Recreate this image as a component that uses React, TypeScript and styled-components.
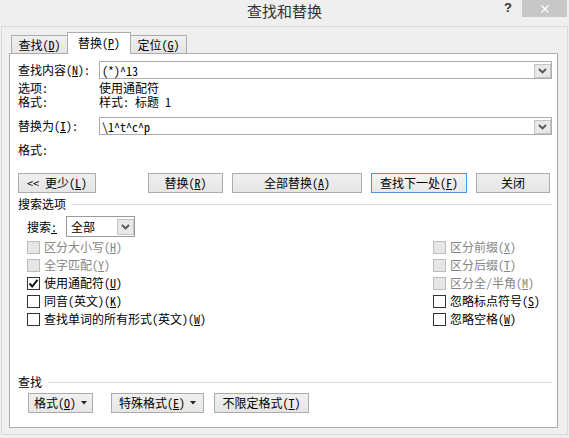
import React from "react";
import styled, { createGlobalStyle } from "styled-components";

const Global = createGlobalStyle`
  html, body { margin: 0; padding: 0; background: #efefef; }
  body {
    font-family: "Noto Sans Mono CJK SC", "Noto Sans CJK SC", sans-serif;
    font-size: 12px;
    color: #000;
  }
  #root { width: 569px; height: 438px; }
`;

const Window = styled.div`
  width: 569px;
  height: 438px;
  box-sizing: border-box;
  background: #efefef;
  display: flex;
  flex-direction: column;
  overflow: hidden;
`;

const TitleBar = styled.div`
  flex: none;
  height: 26px;
  display: grid;
  grid-template-columns: 1fr auto 1fr;
  align-items: start;
`;

const Title = styled.div`
  grid-column: 2;
  font-family: "Noto Sans CJK SC", sans-serif;
  font-size: 15px;
  line-height: 22px;
  color: #333;
`;

const TitleTools = styled.div`
  grid-column: 3;
  justify-self: end;
  display: flex;
  align-items: flex-start;
  margin-right: 2px;
`;

const HelpMark = styled.span`
  font: bold 13px "Liberation Sans", sans-serif;
  line-height: 15px;
  color: #333;
  margin-right: 10px;
`;

const CloseBtn = styled.div`
  width: 45px;
  height: 17px;
  background: #c7c7c7;
  display: flex;
  align-items: center;
  justify-content: center;
`;

const Frame = styled.div`
  flex: 1;
  display: flex;
  flex-direction: column;
  margin: 0 1px 3px 1px;
  border: 1px solid #d9d9d9;
  padding: 5px 9px 6px 7px;
  min-height: 0;
`;

const TabRow = styled.div`
  flex: none;
  height: 21px;
  display: flex;
  align-items: flex-end;
  padding-left: 2px;
`;

const Tab = styled.div<{ $w: number; $active?: boolean; $overlap?: boolean }>`
  box-sizing: border-box;
  width: ${(p) => p.$w}px;
  height: ${(p) => (p.$active ? 22 : 18)}px;
  margin-bottom: ${(p) => (p.$active ? -1 : 0)}px;
  margin-left: ${(p) => (p.$active || p.$overlap ? -1 : 0)}px;
  position: relative;
  z-index: ${(p) => (p.$active ? 1 : 0)};
  border: 1px solid #acacac;
  border-bottom: none;
  background: ${(p) => (p.$active ? "#fff" : "linear-gradient(#f0f0f0, #e5e5e5)")};
  display: flex;
  align-items: center;
  justify-content: center;
  line-height: 16px;
  padding-bottom: ${(p) => (p.$active ? 2 : 0)}px;
`;

const Panel = styled.div`
  flex: 1;
  display: flex;
  flex-direction: column;
  background: #fff;
  border: 1px solid #acacac;
  padding: 7px 5px 14px 8px;
  min-height: 0;
`;

const FieldRow = styled.div<{ $mt?: number }>`
  display: flex;
  align-items: center;
  margin-top: ${(p) => p.$mt ?? 0}px;
`;

const Label = styled.div`
  width: 81px;
  flex: none;
  line-height: 14px;
  white-space: nowrap;
`;

const InfoRow = styled.div<{ $mt?: number }>`
  display: flex;
  line-height: 14px;
  height: 14px;
  margin-top: ${(p) => p.$mt ?? 0}px;
`;

const Value = styled.div`
  white-space: nowrap;
`;

const Combo = styled.div<{ $w?: number; $h: number; $border?: string }>`
  box-sizing: border-box;
  ${(p) => (p.$w ? `width: ${p.$w}px; flex: none;` : "flex: 1;")}
  height: ${(p) => p.$h}px;
  border: 1px solid ${(p) => p.$border ?? "#acacac"};
  background: #fff;
  display: flex;
  padding: 1px 0 0 0;
`;

const ComboText = styled.div<{ $pl?: number }>`
  flex: 1;
  padding-left: ${(p) => p.$pl ?? 2}px;
  line-height: 14px;
  white-space: nowrap;
  align-self: center;
`;

const DropBtn = styled.div<{ $mb?: number }>`
  box-sizing: border-box;
  width: 17px;
  flex: none;
  margin: 1px 0 ${(p) => p.$mb ?? 0}px 0;
  border: 1px solid #c4c4c4;
  background: #e8e8e8;
  display: flex;
  align-items: center;
  justify-content: center;
`;

const ButtonRow = styled.div<{ $mt?: number; $pl?: number }>`
  display: flex;
  margin-top: ${(p) => p.$mt ?? 0}px;
  padding-left: ${(p) => p.$pl ?? 0}px;
`;

const Button = styled.div<{ $w: number; $ml?: number; $default?: boolean }>`
  box-sizing: border-box;
  width: ${(p) => p.$w}px;
  height: 20px;
  margin-left: ${(p) => p.$ml ?? 0}px;
  border: 1px solid ${(p) => (p.$default ? "#4c94dd" : "#acacac")};
  background: ${(p) =>
    p.$default ? "linear-gradient(#f4f4f4, #e8e8e8)" : "linear-gradient(#f0f0f0, #e5e5e5)"};
  display: flex;
  align-items: center;
  justify-content: center;
  gap: 5px;
  line-height: 16px;
  white-space: nowrap;
`;

const SectionHeading = styled.div<{ $mt?: number }>`
  display: flex;
  align-items: center;
  gap: 6px;
  line-height: 14px;
  height: 14px;
  margin-top: ${(p) => p.$mt ?? 0}px;
  &::after {
    content: "";
    flex: 1;
    height: 1px;
    background: #dcdcdc;
  }
`;

const SearchRow = styled.div`
  display: flex;
  align-items: center;
  margin-top: 5px;
  padding-left: 9px;
  gap: 4px;
`;

const SearchLabel = styled.div`
  width: 35px;
  line-height: 14px;
  white-space: nowrap;
`;

const CheckGrid = styled.div`
  display: grid;
  grid-template-columns: 406px 1fr;
  grid-template-rows: repeat(5, 18px);
  grid-auto-flow: column;
  margin-top: 1px;
  padding-left: 9px;
`;

const CheckItem = styled.div<{ $disabled?: boolean }>`
  display: flex;
  align-items: center;
  gap: 4px;
  color: ${(p) => (p.$disabled ? "#858585" : "#000")};
  line-height: 14px;
  white-space: nowrap;
`;

const Box = styled.div<{ $disabled?: boolean }>`
  box-sizing: border-box;
  width: 13px;
  height: 13px;
  flex: none;
  border: 1px solid ${(p) => (p.$disabled ? "#bcbcbc" : "#333")};
  background: ${(p) => (p.$disabled ? "#e6e6e6" : "#fff")};
  display: flex;
  align-items: center;
  justify-content: center;
`;

const Spacer = styled.div`
  flex: 1;
`;

const Acc = styled.u`
  text-decoration: underline;
  text-underline-offset: 1px;
`;

const Chevron = () => (
  <svg width="9" height="6" viewBox="0 0 9 6">
    <path d="M1 1 L4.5 4.5 L8 1" fill="none" stroke="#555" strokeWidth="1.8" />
  </svg>
);

const Caret = () => (
  <svg width="6" height="4" viewBox="0 0 6 4">
    <path d="M0 0 H6 L3 3.5 Z" fill="#222" />
  </svg>
);

const Tick = () => (
  <svg width="11" height="11" viewBox="0 0 11 11">
    <path d="M1.5 5.5 L4.2 8.5 L9.5 1.8" fill="none" stroke="#111" strokeWidth="1.9" />
  </svg>
);

const CloseIcon = () => (
  <svg width="10" height="10" viewBox="0 0 10 10">
    <path d="M1.5 1.5 L8.5 8.5 M8.5 1.5 L1.5 8.5" stroke="#fff" strokeWidth="1.4" />
  </svg>
);

type Opt = { text: string; key: string; disabled?: boolean; checked?: boolean };

const options: Opt[] = [
  { text: "区分大小写", key: "H", disabled: true },
  { text: "全字匹配", key: "Y", disabled: true },
  { text: "使用通配符", key: "U", checked: true },
  { text: "同音(英文)", key: "K" },
  { text: "查找单词的所有形式(英文)", key: "W" },
  { text: "区分前缀", key: "X", disabled: true },
  { text: "区分后缀", key: "T", disabled: true },
  { text: "区分全/半角", key: "M", disabled: true },
  { text: "忽略标点符号", key: "S" },
  { text: "忽略空格", key: "W" },
];

const A = ({ t, k }: { t: string; k: string }) => (
  <span>
    {t}(<Acc>{k}</Acc>)
  </span>
);

export default function App() {
  return (
    <>
      <Global />
      <Window>
        <TitleBar>
          <Title>查找和替换</Title>
          <TitleTools>
            <HelpMark>?</HelpMark>
            <CloseBtn>
              <CloseIcon />
            </CloseBtn>
          </TitleTools>
        </TitleBar>
        <Frame>
          <TabRow>
            <Tab $w={57}>
              <A t="查找" k="D" />
            </Tab>
            <Tab $w={64} $active>
              <A t="替换" k="P" />
            </Tab>
            <Tab $w={57} $overlap>
              <A t="定位" k="G" />
            </Tab>
          </TabRow>
          <Panel>
            <FieldRow>
              <Label>
                查找内容(<Acc>N</Acc>):
              </Label>
              <Combo $h={18}>
                <ComboText>(*)^13</ComboText>
                <DropBtn>
                  <Chevron />
                </DropBtn>
              </Combo>
            </FieldRow>
            <InfoRow $mt={2}>
              <Label>选项:</Label>
              <Value>使用通配符</Value>
            </InfoRow>
            <InfoRow>
              <Label>格式:</Label>
              <Value>样式: 标题 1</Value>
            </InfoRow>
            <FieldRow $mt={8}>
              <Label>
                替换为(<Acc>I</Acc>):
              </Label>
              <Combo $h={18}>
                <ComboText>\1^t^c^p</ComboText>
                <DropBtn>
                  <Chevron />
                </DropBtn>
              </Combo>
            </FieldRow>
            <InfoRow $mt={8}>
              <Label>格式:</Label>
            </InfoRow>
            <ButtonRow $mt={16}>
              <Button $w={78}>
                <span>
                  &lt;&lt; 更少(<Acc>L</Acc>)
                </span>
              </Button>
              <Button $w={75} $ml={52}>
                <A t="替换" k="R" />
              </Button>
              <Button $w={130} $ml={9}>
                <A t="全部替换" k="A" />
              </Button>
              <Button $w={96} $ml={9} $default>
                <A t="查找下一处" k="F" />
              </Button>
              <Button $w={74} $ml={9}>
                关闭
              </Button>
            </ButtonRow>
            <SectionHeading $mt={4}>搜索选项</SectionHeading>
            <SearchRow>
              <SearchLabel>
                搜索<Acc>:</Acc>
              </SearchLabel>
              <Combo $w={69} $h={21} $border="#9a9a9a">
                <ComboText $pl={4}>全部</ComboText>
                <DropBtn $mb={1}>
                  <Chevron />
                </DropBtn>
              </Combo>
            </SearchRow>
            <CheckGrid>
              {options.map((o, i) => (
                <CheckItem key={i} $disabled={o.disabled}>
                  <Box $disabled={o.disabled}>{o.checked && <Tick />}</Box>
                  <A t={o.text} k={o.key} />
                </CheckItem>
              ))}
            </CheckGrid>
            <Spacer />
            <SectionHeading>查找</SectionHeading>
            <ButtonRow $mt={4} $pl={10}>
              <Button $w={65}>
                <A t="格式" k="O" />
                <Caret />
              </Button>
              <Button $w={93} $ml={18}>
                <A t="特殊格式" k="E" />
                <Caret />
              </Button>
              <Button $w={95} $ml={10}>
                <A t="不限定格式" k="T" />
              </Button>
            </ButtonRow>
          </Panel>
        </Frame>
      </Window>
    </>
  );
}
